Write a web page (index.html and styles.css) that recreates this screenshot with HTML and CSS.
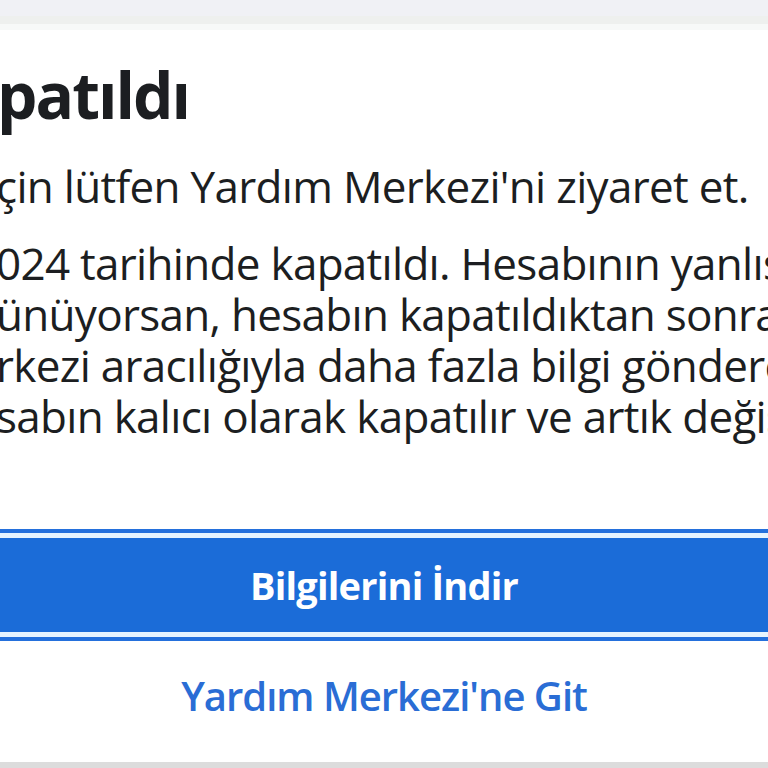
FILE: index.html
```html
<!DOCTYPE html>
<html lang="tr">
<head>
    <meta charset="UTF-8">
    <meta name="viewport" content="width=device-width, initial-scale=1.0">
    <title>Hesabın kapatıldı</title>
    <link rel="stylesheet" href="styles.css">
</head>
<body>
    <div class="topbar"></div>

    <div class="card">
        <h1 class="title">patıldı</h1>

        <p class="text">çin lütfen Yardım Merkezi'ni ziyaret et.</p>

        <p class="text">
            <span class="line">024 tarihinde kapatıldı. Hesabının yanlışlıkla</span>
            <span class="line">ünüyorsan, hesabın kapatıldıktan sonraki</span>
            <span class="line">rkezi aracılığıyla daha fazla bilgi gönderebilirsin.</span>
            <span class="line">sabın kalıcı olarak kapatılır ve artık değiştirilemez.</span>
        </p>

        <div class="actions">
            <button class="primary">Bilgilerini İndir</button>
            <a class="link" href="#">Yardım Merkezi'ne Git</a>
        </div>
    </div>

    <div class="bottombar"></div>
</body>
</html>
```

FILE: styles.css
```css
body {
    margin: 0;
    height: 768px;
    overflow: hidden;
    background-color: #fff;
    font-family: "Open Sans", "Noto Sans", sans-serif;
    color: #1c1e21;
}
.topbar {
    height: 16px;
    background-color: #f0f1f5;
    border-bottom: 8px solid #eef0ee;
}
.card {
    height: 732px;
    border-top: 6px solid #f7f9f8;
    overflow: hidden;
    white-space: nowrap;
}
.title {
    margin: 0 0 0 -3px;
    padding-top: 30px;
    font-size: 64px;
    line-height: 70px;
    font-weight: 700;
    letter-spacing: -2px;
}
.text {
    margin: 31px 0 0 -4px;
    font-size: 44px;
    line-height: 51px;
    letter-spacing: -0.7px;
}
.text + .text {
    margin-top: 26px;
}
.line {
    display: block;
}
.actions {
    margin-top: 96px;
    display: flex;
    flex-direction: column;
    align-items: center;
}
.primary {
    width: 790px;
    height: 94px;
    margin: 0 -11px;
    border: none;
    background-color: #1b6cd8;
    color: #fff;
    font-family: inherit;
    font-size: 38px;
    font-weight: 700;
    letter-spacing: -0.8px;
    outline: 4px solid #2470dc;
    outline-offset: 5px;
    box-shadow: 0 0 0 5px #e6f4ff;
}
.link {
    margin-top: 36px;
    color: #2a6dd5;
    font-size: 40px;
    font-weight: 600;
    letter-spacing: -1px;
    text-decoration: none;
}
.bottombar {
    height: 6px;
    background-color: #dcdcdc;
}
```
